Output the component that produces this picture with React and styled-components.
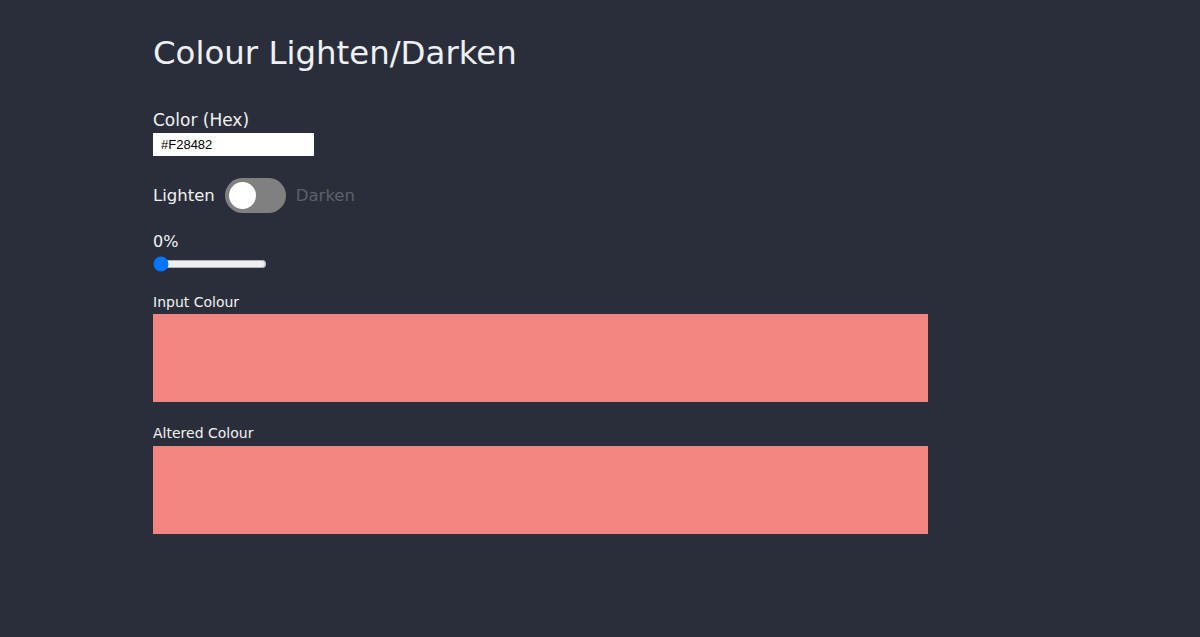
import React, { useState } from "react";
import styled, { createGlobalStyle } from "styled-components";

const GlobalStyle = createGlobalStyle`
  html, body {
    margin: 0;
    padding: 0;
    background-color: #2a2e3a;
  }
  body {
    font-family: "DejaVu Sans", "Noto Sans", sans-serif;
    color: #f2f2f2;
  }
`;

const Page = styled.div`
  min-height: 637px;
  padding: 30px 0 0 153px;
  box-sizing: border-box;
`;

const Title = styled.h1`
  font-size: 32.4px;
  font-weight: 400;
  margin: 0 0 34px;
  line-height: 46px;
  color: #eef0f4;
`;

const Field = styled.div`
  display: flex;
  flex-direction: column;
  align-items: flex-start;
`;

const Label = styled.label`
  font-size: ${(p) => p.size || 16}px;
  line-height: 1.2;
  color: ${(p) => (p.dim ? "#5c606b" : "#f2f2f2")};
  margin-bottom: ${(p) => p.gap || 0}px;
`;

const HexInput = styled.input`
  width: 161px;
  height: 23px;
  box-sizing: border-box;
  border: none;
  padding: 2px 8px;
  font-family: "Liberation Sans", Arial, sans-serif;
  font-size: 13px;
  color: #000;
  background: #fff;
  outline: none;
`;

const ToggleRow = styled.div`
  display: flex;
  align-items: center;
  gap: 10px;
  margin-top: 22px;
`;

const Switch = styled.label`
  position: relative;
  display: inline-block;
  width: 61px;
  height: 35px;
  cursor: pointer;

  input {
    opacity: 0;
    width: 0;
    height: 0;
  }
`;

const Track = styled.span`
  position: absolute;
  inset: 0;
  border-radius: 35px;
  background-color: ${(p) => (p.on ? "#4a4e59" : "#808080")};
  transition: 0.3s;

  &::before {
    content: "";
    position: absolute;
    width: 27px;
    height: 27px;
    left: 4px;
    top: 4px;
    border-radius: 50%;
    background: #fff;
    transition: 0.3s;
    transform: translateX(${(p) => (p.on ? "26px" : "0")});
  }
`;

const Range = styled.input`
  width: 114px;
  margin: 4px 0 0;
  accent-color: #0075ff;
`;

const Swatch = styled.div`
  width: 775px;
  height: 88px;
  background-color: ${(p) => p.color};
`;

const Block = styled(Field)`
  margin-top: ${(p) => p.top}px;
`;

function clamp(v) {
  return Math.max(0, Math.min(255, Math.round(v)));
}

function alter(hex, pct, dark) {
  const h = hex.replace("#", "");
  if (h.length !== 6) return hex;
  const amt = Math.round(2.55 * pct) * (dark ? -1 : 1);
  const n = [0, 2, 4].map((i) => clamp(parseInt(h.slice(i, i + 2), 16) + amt));
  return "#" + n.map((x) => x.toString(16).padStart(2, "0")).join("");
}

export default function App() {
  const [hex, setHex] = useState("#F28482");
  const [dark, setDark] = useState(false);
  const [pct, setPct] = useState(0);

  return (
    <Page>
      <GlobalStyle />
      <Title>Colour Lighten/Darken</Title>

      <Field>
        <Label size={17} gap={3} htmlFor="hex">Color (Hex)</Label>
        <HexInput id="hex" value={hex} onChange={(e) => setHex(e.target.value)} />
      </Field>

      <ToggleRow>
        <Label size={16.5} dim={dark}>Lighten</Label>
        <Switch>
          <input type="checkbox" checked={dark} onChange={() => setDark(!dark)} />
          <Track on={dark ? 1 : 0} />
        </Switch>
        <Label size={16.5} dim={!dark}>Darken</Label>
      </ToggleRow>

      <Block top={19}>
        <Label size={16}>{pct}%</Label>
        <Range type="range" min="0" max="100" value={pct} onChange={(e) => setPct(+e.target.value)} />
      </Block>

      <Block top={22}>
        <Label size={14} gap={4}>Input Colour</Label>
        <Swatch color={hex} />
      </Block>

      <Block top={23}>
        <Label size={14} gap={4}>Altered Colour</Label>
        <Swatch color={alter(hex, pct, dark)} />
      </Block>
    </Page>
  );
}
